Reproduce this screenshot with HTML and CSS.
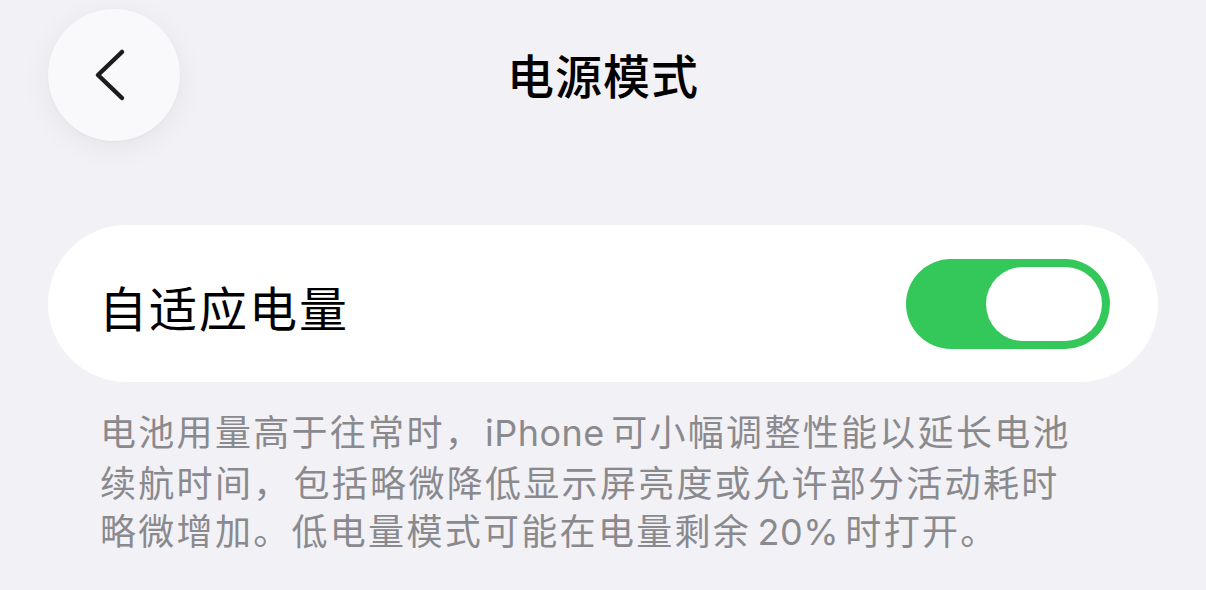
FILE: index.html
```html
<!DOCTYPE html>
<html lang="zh-CN">
<head>
<meta charset="utf-8">
<title>电源模式</title>
<link rel="stylesheet" href="styles.css">
</head>
<body>
<div class="page">
  <header class="nav">
    <button class="back" aria-label="返回">
      <svg width="40" height="60" viewBox="0 0 40 60" aria-hidden="true">
        <path d="M31 7 L7 30 L31 53" fill="none" stroke="#1c1c1e" stroke-width="4.5" stroke-linecap="round" stroke-linejoin="round"/>
      </svg>
    </button>
    <h1 class="title">电源模式</h1>
    <span class="nav-spacer"></span>
  </header>

  <section class="card">
    <span class="row-label">自适应电量</span>
    <span class="switch is-on" role="switch" aria-checked="true"><span class="knob"></span></span>
  </section>

  <p class="footnote">电池用量高于往常时，<span class="latin lead">iPhone</span> 可小幅调整性能以延长电池<br>续航时间，<span class="gap"></span>包括略微降低显示屏亮度或允许部分活动耗时<br>略微增加。低电量模式可能在电量剩余 <span class="latin">20%</span> 时打开。</p>
</div>
</body>
</html>
```

FILE: styles.css
```css
html, body {
  margin: 0;
  padding: 0;
}

body {
  background: #f2f1f6;
  font-family: "Noto Sans CJK SC", "Noto Sans", sans-serif;
  color: #000;
  width: 1206px;
  height: 590px;
  overflow: hidden;
}

.page {
  padding: 9px 48px 0;
}

.nav {
  display: grid;
  grid-template-columns: 1fr auto 1fr;
  align-items: center;
  height: 132px;
}

.back {
  width: 132px;
  height: 132px;
  border: none;
  border-radius: 50%;
  background: #f9f9fb;
  box-shadow: 0 6px 30px rgba(0, 0, 0, 0.06), 0 1px 3px rgba(0, 0, 0, 0.03);
  display: flex;
  align-items: center;
  justify-content: center;
  padding: 0 6px 0 0;
  cursor: pointer;
}

.back svg {
  display: block;
}

.title {
  margin: 0 0 4px;
  font-size: 47px;
  font-weight: 500;
  letter-spacing: 1px;
  line-height: 1;
}

.card {
  margin-top: 84px;
  height: 157px;
  background: #fff;
  border-radius: 79px;
  display: flex;
  align-items: center;
  justify-content: space-between;
  padding: 0 48px 0 51px;
  box-sizing: border-box;
}

.row-label {
  font-size: 48px;
  letter-spacing: 2px;
  line-height: 1;
  margin-top: 4px;
}

.switch {
  width: 204px;
  height: 90px;
  border-radius: 45px;
  background: #34c759;
  display: flex;
  align-items: center;
  justify-content: flex-end;
  padding: 0 8px;
  box-sizing: border-box;
}

.knob {
  width: 116px;
  height: 74px;
  border-radius: 37px;
  background: #fff;
}

.footnote {
  margin: 24px 0 0 52px;
  font-size: 36px;
  line-height: 48px;
  letter-spacing: 2.3px;
  word-spacing: -4px;
  color: #8a8a8e;
  white-space: nowrap;
}

.latin {
  font-family: Inter, "Noto Sans", sans-serif;
  font-weight: 400;
  letter-spacing: 0.5px;
}

.lead {
  margin-left: 2px;
}

.gap {
  display: inline-block;
  width: 2px;
}
```
